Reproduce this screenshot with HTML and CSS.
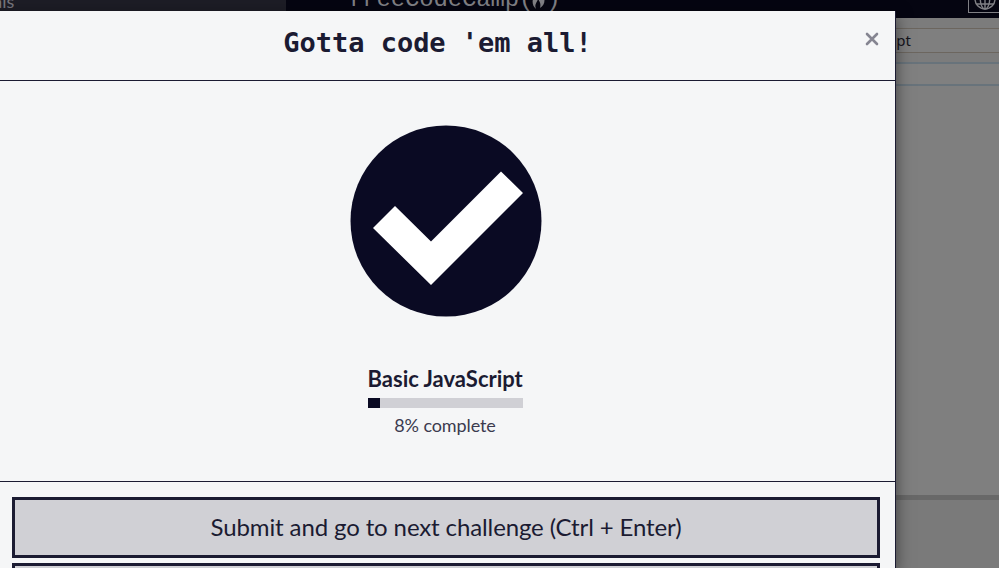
FILE: index.html
```html
<!DOCTYPE html>
<html lang="en">
<head>
<meta charset="utf-8">
<title>Basic JavaScript</title>
<link rel="stylesheet" href="styles.css">
</head>
<body>
<div class="page">
  <header class="nav">
    <div class="search"><span>ials</span></div>
    <div class="logo">
      <span>freeCodeCamp(</span>
      <svg class="flame" viewBox="0 0 14 20"><path d="M4 3C0 8-1 15 4 19c-2-5 1-6 2-10 2 3 3 5 2 9 5-3 6-9 2-14 1 4 0 5-1 5C9 5 7 2 5 0c1 5-2 7-3 10z"/></svg>
      <span>)</span>
    </div>
    <div class="lang">
      <svg viewBox="0 0 22 22"><circle cx="11" cy="11" r="10"/><ellipse cx="11" cy="11" rx="4.7" ry="10"/><path d="M11 1v20M1 11h20M2.500 16h17M2.500 6h17"/></svg>
    </div>
  </header>
  <div class="tabs"><span>JavaScript</span></div>
  <div class="toolbar"></div>
  <div class="editor"></div>
  <div class="console"></div>
</div>
<div class="modal" role="dialog">
  <div class="modal-header">
    <h2>Gotta code 'em all!</h2>
    <button class="close" aria-label="Close"><svg viewBox="0 0 14 14"><path d="M2 2l10 10M12 2L2 12"/></svg></button>
  </div>
  <div class="modal-body">
    <svg class="check" viewBox="0 0 192 192"><circle cx="96" cy="96" r="95.5"/><path d="M23 103l22-22 36 35.500 70-70 22 21.500-92 92z"/></svg>
    <div class="progress">
      <h3>Basic JavaScript</h3>
      <div class="bar"><div class="fill" style="width: 8%"></div></div>
      <p>8% complete</p>
    </div>
  </div>
  <div class="modal-footer">
    <button class="btn">Submit and go to next challenge (Ctrl + Enter)</button>
    <button class="btn"></button>
  </div>
</div>
</body>
</html>
```
FILE: styles.css
```css
* { box-sizing: border-box; }
body {
  margin: 0;
  width: 999px;
  height: 568px;
  overflow: hidden;
  position: relative;
  font-family: Lato, sans-serif;
  color: #1b1b32;
  background: #7c7c7c;
}
.page { height: 568px; display: flex; flex-direction: column; }
.nav {
  height: 18px;
  flex: none;
  display: flex;
  align-items: flex-end;
  background: #050511;
  overflow: hidden;
}
.search {
  width: 286px;
  height: 18px;
  background: #1d1d26;
  color: #77777f;
  font-size: 18px;
  line-height: 18px;
}
.search span { display: block; margin: -8px 0 0 -11px; }
.logo {
  flex: 1;
  display: flex;
  height: 18px;
  padding-left: 62px;
  color: #808085;
  font: 24px/24px "Liberation Mono", monospace;
  letter-spacing: -0.15px;
}
.logo span { display: block; margin-top: -12px; }
.flame { width: 14px; height: 20px; margin: -10px 0 0 -1px; fill: #808085; }
.lang {
  width: 31px;
  height: 18px;
  flex: none;
  border: 1px solid #808085;
  border-top: 0;
  border-right: 0;
  margin-bottom: 5px;
  padding-left: 5px;
}
.lang svg { display: block; width: 22px; height: 22px; margin-top: -7px; fill: none; stroke: #808085; stroke-width: 1.400; }
.tabs {
  height: 25px;
  flex: none;
  margin-top: 10px;
  border-top: 1px solid #6c665f;
  border-bottom: 1px solid #6c665f;
  background: #7f7f7f;
  padding-right: 88px;
  text-align: right;
  font: 15px/23px "Noto Sans", sans-serif;
  color: #15151c;
}
.toolbar {
  height: 24px;
  flex: none;
  margin-top: 9px;
  border-top: 2px solid #68737b;
  border-bottom: 2px solid #68737b;
  background: #808080;
}
.editor { height: 409px; flex: none; background: #7f7f7f; }
.console { flex: 1; border-top: 5px solid #686868; background: #7a7a7a; }
.modal {
  position: absolute;
  left: -4px;
  top: 11px;
  width: 900px;
  height: 557px;
  overflow: hidden;
  border: 1px solid #1b1b32;
  border-top: 0;
  border-bottom: 0;
  background: #f5f6f7;
  box-shadow: 0 5px 15px rgba(0, 0, 0, 0.5);
}
.modal-header {
  display: grid;
  grid-template-columns: 1fr 14px;
  align-items: start;
  height: 70px;
  padding: 16px 16px 0 15px;
  border-bottom: 1px solid #1b1b32;
}
.modal-header h2 {
  margin: 0 2px 0 0;
  text-align: center;
  font: bold 27px/32px "DejaVu Sans Mono", monospace;
  letter-spacing: -0.03px;
}
.close { border: 0; padding: 0; background: none; margin-top: 5px; }
.close svg { display: block; width: 14px; height: 14px; stroke: #858591; stroke-width: 2.600; stroke-linecap: round; }
.modal-body {
  height: 401px;
  display: flex;
  flex-direction: column;
  align-items: center;
  padding-top: 44px;
  border-bottom: 1px solid #1b1b32;
}
.check { width: 192px; height: 192px; fill: #0a0a23; }
.check path { fill: #fff; }
.progress { width: 155px; margin: 48px 2px 0 0; text-align: center; }
.progress h3 { margin: 0; font-size: 22px; line-height: 28px; font-weight: 700; white-space: nowrap; }
.bar { height: 10px; margin-top: 5px; background: #d0d0d5; }
.fill { height: 10px; background: #0a0a23; }
.progress p { margin: 5px 0 0; font-size: 18px; line-height: 24px; color: #3b3b4f; letter-spacing: -0.1px; }
.modal-footer { padding: 15px 15px 0; display: flex; flex-direction: column; gap: 5px; }
.btn {
  height: 61px;
  flex: none;
  border: 3px solid #1b1b32;
  background: #d0d0d5;
  color: #1b1b32;
  font: 24px/34px Lato, sans-serif;
  letter-spacing: -0.12px;
  padding: 0 0 2px;
}
```
